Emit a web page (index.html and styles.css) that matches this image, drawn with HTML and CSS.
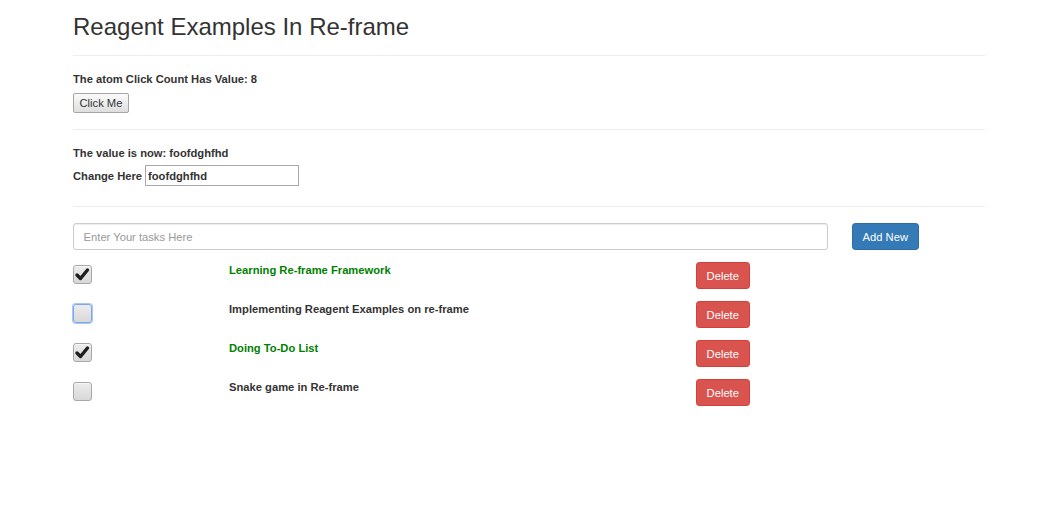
FILE: index.html
```html
<!DOCTYPE html>
<html>
<head>
<meta charset="utf-8">
<title>Reagent Examples In Re-frame</title>
<link rel="stylesheet" href="styles.css">
</head>
<body>
<div class="container">
  <h2 class="title">Reagent Examples In Re-frame</h2>
  <hr class="rule rule-top">

  <section class="counter">
    <label class="label">The atom Click Count Has Value: 8</label>
    <button class="plain-btn" type="button">Click Me</button>
  </section>
  <hr class="rule">

  <section class="echo">
    <label class="label">The value is now: foofdghfhd</label>
    <label class="label change-row">Change Here <input class="plain-input" type="text" value="foofdghfhd"></label>
  </section>
  <hr class="rule rule-echo">

  <section class="todos">
    <div class="add-row">
      <input class="form-control" type="text" placeholder="Enter Your tasks Here">
      <button class="btn btn-primary" type="button">Add New</button>
    </div>

    <div class="task">
      <span class="check checked"><svg viewBox="0 0 19 19" width="19" height="19"><path d="M4 10 L7.5 13.5 L14.5 5" fill="none" stroke="#1e1e1e" stroke-width="3.4" stroke-linecap="round" stroke-linejoin="round"/></svg></span>
      <span class="task-text done">Learning Re-frame Framework</span>
      <div><button class="btn btn-danger" type="button">Delete</button></div>
    </div>
    <div class="task">
      <span class="check focused"></span>
      <span class="task-text">Implementing Reagent Examples on re-frame</span>
      <div><button class="btn btn-danger" type="button">Delete</button></div>
    </div>
    <div class="task">
      <span class="check checked"><svg viewBox="0 0 19 19" width="19" height="19"><path d="M4 10 L7.5 13.5 L14.5 5" fill="none" stroke="#1e1e1e" stroke-width="3.4" stroke-linecap="round" stroke-linejoin="round"/></svg></span>
      <span class="task-text done">Doing To-Do List</span>
      <div><button class="btn btn-danger" type="button">Delete</button></div>
    </div>
    <div class="task">
      <span class="check"></span>
      <span class="task-text">Snake game in Re-frame</span>
      <div><button class="btn btn-danger" type="button">Delete</button></div>
    </div>
  </section>
</div>
</body>
</html>
```

FILE: styles.css
```css
* { box-sizing: border-box; }

html, body {
  margin: 0;
  padding: 0;
  background: #fff;
}

body {
  font-family: "Liberation Sans", Helvetica, Arial, sans-serif;
  font-size: 11.2px;
  line-height: 16px;
  color: #333;
}

.container {
  margin-left: 73px;
  width: 912px;
}

.title {
  margin: 14px 0 0;
  font-size: 24px;
  line-height: 26px;
  font-weight: 500;
  color: #333;
}

.rule {
  margin: 16px 0 15px;
  border: 0;
  border-top: 1px solid #eee;
  height: 0;
}

.rule-top { margin-top: 15px; }
.rule-echo { margin-top: 20px; margin-bottom: 16px; }

.label {
  display: block;
  font-weight: bold;
  margin-bottom: 4px;
}

.counter .label { margin-bottom: 6px; }

.plain-btn {
  display: block;
  height: 20px;
  padding: 0 5.5px;
  margin: 0;
  font: inherit;
  font-size: 11.2px;
  line-height: 18px;
  color: #333;
  background: linear-gradient(#fbfbfb, #dedede);
  border: 1px solid #a6a6a6;
  border-radius: 2px;
}

.change-row {
  display: flex;
  align-items: baseline;
  gap: 3px;
  margin-bottom: 0;
}

.plain-input {
  width: 154px;
  height: 21px;
  padding: 1px 2px;
  margin: 0;
  font: inherit;
  font-weight: bold;
  color: #333;
  border: 1px solid #a9a9a9;
  border-radius: 0;
  background: #fff;
}

.add-row {
  display: grid;
  grid-template-columns: 755px auto;
  column-gap: 24px;
  align-items: start;
  justify-items: start;
}

.form-control {
  width: 100%;
  height: 27px;
  padding: 4px 9.6px;
  margin: 0;
  font: inherit;
  color: #555;
  background: #fff;
  border: 1px solid #ccc;
  border-radius: 3px;
  box-shadow: inset 0 1px 1px rgba(0,0,0,.075);
}

.form-control::placeholder { color: #999; }

.btn {
  display: inline-block;
  height: 27px;
  padding: 4.5px 9.6px;
  margin: 0;
  font: inherit;
  font-size: 11.2px;
  line-height: 16px;
  border: 1px solid transparent;
  border-radius: 3.2px;
  color: #fff;
  white-space: nowrap;
}

.btn-primary {
  background: #337ab7;
  border-color: #2e6da4;
}

.btn-danger {
  background: #d9534f;
  border-color: #d43f3a;
}

.task {
  display: grid;
  grid-template-columns: 156px 467px 1fr;
  align-items: start;
  margin-top: 12px;
}

.check {
  display: block;
  width: 19px;
  height: 19px;
  margin-top: 3px;
  border: 1px solid #a8a8a8;
  border-radius: 3px;
  background: linear-gradient(#ececec, #d8d8d8);
  box-shadow: inset 0 1px 0 rgba(255,255,255,.6);
  position: relative;
}

.check svg {
  position: absolute;
  left: -1px;
  top: -1px;
}

.check.focused {
  border: 1px solid #7aa7ee;
  box-shadow: 0 0 0 1px #a9c7f5;
}

.task-text {
  font-weight: bold;
  color: #333;
}

.task-text.done {
  color: #008000;
}
```
